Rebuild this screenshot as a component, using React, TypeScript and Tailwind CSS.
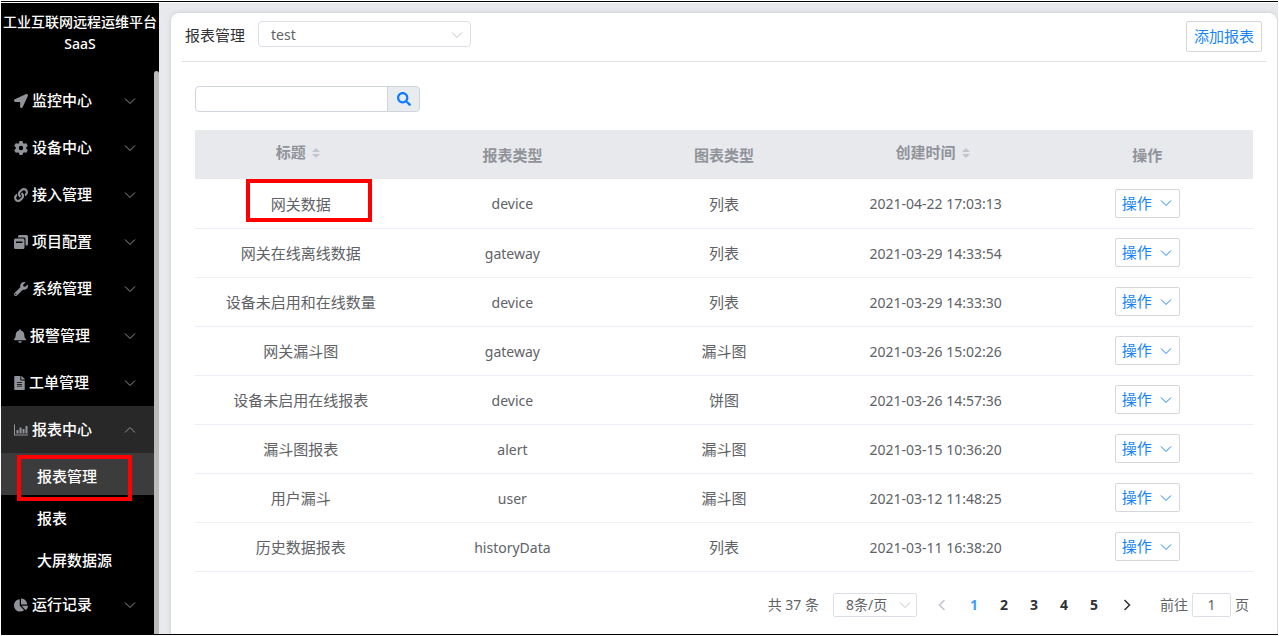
import { useState } from "react";
import type { ReactNode } from "react";
import {
  FaBell,
  FaChartPie,
  FaFileAlt,
  FaLink,
  FaLocationArrow,
  FaSearch,
  FaWrench,
} from "react-icons/fa";
import { FaGear } from "react-icons/fa6";

interface Report {
  title: string;
  type: string;
  chart: string;
  createdAt: string;
}

interface MenuItem {
  label: string;
  icon: ReactNode;
  children?: string[];
}

const reports: Report[] = [
  { title: "网关数据", type: "device", chart: "列表", createdAt: "2021-04-22 17:03:13" },
  { title: "网关在线离线数据", type: "gateway", chart: "列表", createdAt: "2021-03-29 14:33:54" },
  { title: "设备未启用和在线数量", type: "device", chart: "列表", createdAt: "2021-03-29 14:33:30" },
  { title: "网关漏斗图", type: "gateway", chart: "漏斗图", createdAt: "2021-03-26 15:02:26" },
  { title: "设备未启用在线报表", type: "device", chart: "饼图", createdAt: "2021-03-26 14:57:36" },
  { title: "漏斗图报表", type: "alert", chart: "漏斗图", createdAt: "2021-03-15 10:36:20" },
  { title: "用户漏斗", type: "user", chart: "漏斗图", createdAt: "2021-03-12 11:48:25" },
  { title: "历史数据报表", type: "historyData", chart: "列表", createdAt: "2021-03-11 16:38:20" },
];

const columns = [
  { label: "标题", sortable: true },
  { label: "报表类型", sortable: false },
  { label: "图表类型", sortable: false },
  { label: "创建时间", sortable: true },
  { label: "操作", sortable: false },
];

function ProjectIcon() {
  return (
    <svg viewBox="0 0 28 28" className="h-3.5 w-3.5" fill="currentColor">
      <path d="M8 5V3a3 3 0 0 1 3-3h14a3 3 0 0 1 3 3v15a3 3 0 0 1-3 3h-2V8a3 3 0 0 0-3-3z" />
      <path
        fillRule="evenodd"
        d="M3 7h15a3 3 0 0 1 3 3v15a3 3 0 0 1-3 3H3a3 3 0 0 1-3-3V10a3 3 0 0 1 3-3zM4 13v3h13v-3z"
      />
    </svg>
  );
}

function ReportIcon() {
  return (
    <svg viewBox="0 0 28 24" className="h-3 w-3.5" fill="currentColor">
      <path d="M0 1h2v20h26v2H0z" />
      <path d="M5 12h4v7H5zM11 7h4v12h-4zM17 10h4v9h-4zM23 4h4v15h-4z" />
    </svg>
  );
}

const menu: MenuItem[] = [
  { label: "监控中心", icon: <FaLocationArrow className="h-3.5 w-3.5" /> },
  { label: "设备中心", icon: <FaGear className="h-3.5 w-3.5" /> },
  { label: "接入管理", icon: <FaLink className="h-3.5 w-3.5" /> },
  { label: "项目配置", icon: <ProjectIcon /> },
  { label: "系统管理", icon: <FaWrench className="h-3.5 w-3.5" /> },
  { label: "报警管理", icon: <FaBell className="h-3.5 w-3" /> },
  { label: "工单管理", icon: <FaFileAlt className="h-3.5 w-[11px]" /> },
  {
    label: "报表中心",
    icon: <ReportIcon />,
    children: ["报表管理", "报表", "大屏数据源"],
  },
  { label: "运行记录", icon: <FaChartPie className="h-3.5 w-3.5" /> },
];

function Chevron({ className = "" }: { className?: string }) {
  return (
    <svg viewBox="0 0 12 12" className={`h-3 w-3 ${className}`} fill="none" stroke="currentColor">
      <path d="M1 3.500 6 8.500 11 3.500" />
    </svg>
  );
}

function SortCaret() {
  return (
    <svg viewBox="0 0 8 10" className="h-2.5 w-2" fill="#c0c4cc">
      <path d="M4 0 8 4H0zM4 10 0 6h8z" />
    </svg>
  );
}

function Sidebar() {
  const [open, setOpen] = useState("报表中心");

  return (
    <aside className="flex w-[158px] shrink-0 flex-col bg-black text-white">
      <h1 className="h-[68px] shrink-0 pt-2 text-center text-sm leading-[22px] font-medium">
        <span className="whitespace-nowrap">工业互联网远程运维平台</span>
        <br />
        SaaS
      </h1>
      <div className="flex min-h-0 flex-1">
        <nav className="min-w-0 flex-1 overflow-hidden pt-1.5">
          {menu.map((item) => {
            const expanded = item.label === open && !!item.children;
            return (
              <div key={item.label}>
                <button
                  onClick={() => setOpen(expanded ? "" : item.label)}
                  className={`flex h-[47px] w-full items-center gap-1 pr-[18px] pl-[13px] text-[15px] font-medium ${
                    expanded ? "bg-[#282828]" : ""
                  }`}
                >
                  <span className="text-[#909399]">{item.icon}</span>
                  {item.label}
                  <Chevron
                    className={`ml-auto text-[#909399] ${expanded ? "rotate-180" : ""}`}
                  />
                </button>
                {expanded && (
                  <div className="pb-0.5">
                    {item.children?.map((child, i) => (
                      <a
                        key={child}
                        href="#"
                        className={`relative flex h-[42px] items-center pt-1 pl-9 text-[15px] font-medium ${
                          i === 0 ? "bg-[#3c3c3c]" : ""
                        }`}
                      >
                        {child}
                        {i === 0 && (
                          <span className="absolute top-0.5 left-4 z-10 h-[46px] w-[115px] border-4 border-[#fe0000]" />
                        )}
                      </a>
                    ))}
                  </div>
                )}
              </div>
            );
          })}
        </nav>
        <div className="w-[5px] rounded-t-sm bg-[#bcbaba]" />
      </div>
    </aside>
  );
}

function ReportTable() {
  return (
    <table className="mt-[18px] w-full table-fixed text-center text-[#606266]">
      <thead>
        <tr className="h-[49px] bg-[#e8e9ed] text-[15px] text-[#909399]">
          {columns.map((col) => (
            <th key={col.label} className="p-0 pt-0.5 font-bold">
              {col.sortable ? (
                <button className="mb-1.5 inline-flex items-center">
                  {col.label}
                  <span className="flex w-5 justify-center">
                    <SortCaret />
                  </span>
                </button>
              ) : (
                <span>{col.label}</span>
              )}
            </th>
          ))}
        </tr>
      </thead>
      <tbody>
        {reports.map((report, i) => (
          <tr key={report.createdAt} className="h-[49px] border-b border-[#ebeef5] text-sm">
            <td className="relative p-0 pt-0.5 text-[15px]">
              {report.title}
              {i === 0 && (
                <span className="absolute top-0 left-[51px] h-[43px] w-[126px] border-4 border-[#fe0000]" />
              )}
            </td>
            <td className="p-0 pt-0.5">{report.type}</td>
            <td className="p-0 pt-0.5 text-[15px]">{report.chart}</td>
            <td className="p-0 pt-0.5">{report.createdAt}</td>
            <td className="p-0">
              <button className="inline-flex h-[29px] w-[65px] items-center justify-between rounded-xs border border-[#d5d7da] pr-[7px] pl-1.5 align-middle text-[15px] text-[#1684fc]">
                操作
                <Chevron />
              </button>
            </td>
          </tr>
        ))}
      </tbody>
    </table>
  );
}

function Pagination() {
  const [page, setPage] = useState(1);

  return (
    <div className="mt-[21px] flex items-center justify-end pr-1 text-sm text-[#606266]">
      <span className="mr-3.5">共 37 条</span>
      <div className="relative mr-2">
        <select
          aria-label="每页条数"
          className="h-6 w-[84px] appearance-none rounded-xs border border-[#dcdfe6] bg-white pl-3"
        >
          <option>8条/页</option>
        </select>
        <Chevron className="pointer-events-none absolute top-1.5 right-1.5 text-[#c0c4cc]" />
      </div>
      <button aria-label="上一页" className="flex w-[34px] justify-center text-[#c0c4cc]">
        <svg viewBox="0 0 12 12" className="h-3 w-3" fill="none" stroke="currentColor" strokeWidth="1.500">
          <path d="M8.500 1 3.500 6l5 5" />
        </svg>
      </button>
      {[1, 2, 3, 4, 5].map((n) => (
        <button
          key={n}
          onClick={() => setPage(n)}
          className={`w-[30px] text-center font-bold ${n === page ? "text-[#409eff]" : "text-[#303133]"}`}
        >
          {n}
        </button>
      ))}
      <button aria-label="下一页" className="mr-4 flex w-[35px] justify-center text-[#303133]">
        <svg viewBox="0 0 12 12" className="h-3 w-3" fill="none" stroke="currentColor" strokeWidth="1.500">
          <path d="M3.500 1l5 5-5 5" />
        </svg>
      </button>
      <label className="flex items-center gap-1">
        前往
        <input
          value={page}
          onChange={(e) => setPage(Number(e.target.value) || 1)}
          className="h-6 w-[39px] rounded-xs border border-[#dcdfe6] text-center"
        />
        页
      </label>
    </div>
  );
}

export default function App() {
  return (
    <div className="h-screen bg-white p-px font-['Noto_Sans','Noto_Sans_CJK_SC',sans-serif]">
      <div className="flex h-full overflow-hidden border-y border-black pt-px">
        <Sidebar />
        <main className="flex min-w-0 flex-1 flex-col bg-[#e8e9ed] pt-2.5 pr-px pl-3">
          <section className="flex-1 rounded-t-lg bg-white px-[11px] shadow-[0_0_4px_#c4c6cc]">
            <header className="flex h-[49px] items-start border-b border-[#dfe0e2] pt-2 pr-1 pl-[3px]">
              <label htmlFor="report-group" className="mr-[13px] text-[15px] leading-7 text-[#303133]">
                报表管理
              </label>
              <div className="relative">
                <select
                  id="report-group"
                  className="h-[26px] w-[213px] appearance-none rounded-sm border border-[#dcdfe6] bg-white pt-0.5 pl-3 text-sm text-[#606266]"
                >
                  <option>test</option>
                </select>
                <Chevron className="pointer-events-none absolute top-2 right-2 text-[#c0c4cc]" />
              </div>
              <button className="ml-auto h-[31px] rounded-xs border border-[#d5d7da] px-[7px] text-[15px] text-[#1684fc]">
                添加报表
              </button>
            </header>
            <div className="px-[13px] pt-6">
              <form className="flex" onSubmit={(e) => e.preventDefault()}>
                <input
                  aria-label="搜索"
                  className="h-[26px] w-[193px] rounded-l-sm border border-[#ced4da] px-2 text-sm"
                />
                <button
                  aria-label="搜索"
                  className="-ml-px flex h-[26px] w-[33px] items-center justify-center rounded-r-sm border border-[#ced4da] bg-[#e9ecef]"
                >
                  <FaSearch className="h-3.5 w-3.5 text-[#0f7bff]" />
                </button>
              </form>
              <ReportTable />
              <Pagination />
            </div>
          </section>
        </main>
      </div>
    </div>
  );
}
